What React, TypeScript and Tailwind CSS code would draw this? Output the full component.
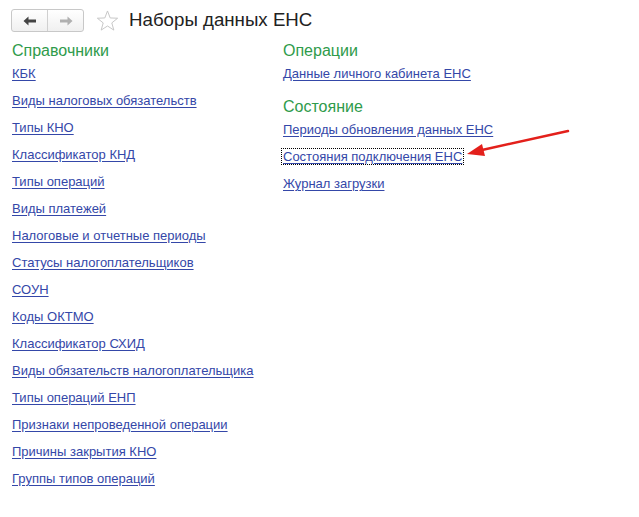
import React from 'react'

const font = {fontFamily: '"Liberation Sans", Arial, sans-serif'}

const refs = [
  'КБК',
  'Виды налоговых обязательств',
  'Типы КНО',
  'Классификатор КНД',
  'Типы операций',
  'Виды платежей',
  'Налоговые и отчетные периоды',
  'Статусы налогоплательщиков',
  'СОУН',
  'Коды ОКТМО',
  'Классификатор СХИД',
  'Виды обязательств налогоплательщика',
  'Типы операций ЕНП',
  'Признаки непроведенной операции',
  'Причины закрытия КНО',
  'Группы типов операций',
]

function Link({children, focused}: {children: React.ReactNode; focused?: boolean}) {
  return (
    <div className="h-[27px] flex items-center">
      <a
        href="#"
        className={`text-[13px] leading-[15px] text-[#3447a8] underline underline-offset-2 ${
          focused ? 'outline outline-1 outline-dotted outline-black -ml-px px-px' : ''
        }`}
      >
        {children}
      </a>
    </div>
  )
}

function Header({children}: {children: React.ReactNode}) {
  return <div className="h-[18px] flex items-center text-[16px] text-[#2f9b4b]">{children}</div>
}

export default function App() {
  return (
    <div className="w-[639px] h-[517px] bg-white relative overflow-hidden" style={font}>
      {/* Title bar */}
      <div className="flex items-center pl-[11px] pt-[9px] h-[32px]">
        <div className="flex h-[23px] w-[73px] rounded-[3px] border border-[#c8c8c8] bg-gradient-to-b from-white to-[#f0f0f0]">
          <button className="flex-1 flex items-center justify-center border-r border-[#d0d0d0]">
            <svg width="14" height="10" viewBox="0 0 14 10">
              <path d="M0.5 5 L5.5 0.5 L5.5 3.5 L13 3.5 L13 6.5 L5.5 6.5 L5.5 9.5 Z" fill="#444" />
            </svg>
          </button>
          <button className="flex-1 flex items-center justify-center">
            <svg width="14" height="10" viewBox="0 0 14 10">
              <path d="M13.5 5 L8.5 0.5 L8.5 3.5 L1 3.5 L1 6.5 L8.5 6.5 L8.5 9.5 Z" fill="#b0b0b0" />
            </svg>
          </button>
        </div>
        <svg className="ml-[12px]" width="23" height="22" viewBox="0 0 24 23">
          <path
            d="M12 1 L14.8 8.3 L22.6 8.6 L16.5 13.5 L18.6 21 L12 16.7 L5.4 21 L7.5 13.5 L1.4 8.6 L9.2 8.3 Z"
            fill="none"
            stroke="#c4c4c4"
            strokeWidth="1"
          />
        </svg>
        <h1 className="ml-[10px] text-[18.7px] text-[#222]">Наборы данных ЕНС</h1>
      </div>

      {/* Content */}
      <div className="flex pt-[10px]">
        <div className="pl-[12px] w-[283px]">
          <Header>Справочники</Header>
          {refs.map(r => (
            <Link key={r}>{r}</Link>
          ))}
        </div>
        <div>
          <Header>Операции</Header>
          <Link>Данные личного кабинета ЕНС</Link>
          <div className="h-[11px]" />
          <Header>Состояние</Header>
          <Link>Периоды обновления данных ЕНС</Link>
          <Link focused>Состояния подключения ЕНС</Link>
          <Link>Журнал загрузки</Link>
        </div>
      </div>

      {/* Red annotation arrow */}
      <svg className="absolute left-0 top-0 pointer-events-none" width="639" height="517">
        <line x1="568" y1="131" x2="482" y2="150" stroke="#e3201b" strokeWidth="2.5" strokeLinecap="round" />
        <path d="M467 154 L482 144 L485 156 Z" fill="#e3201b" />
      </svg>
    </div>
  )
}
